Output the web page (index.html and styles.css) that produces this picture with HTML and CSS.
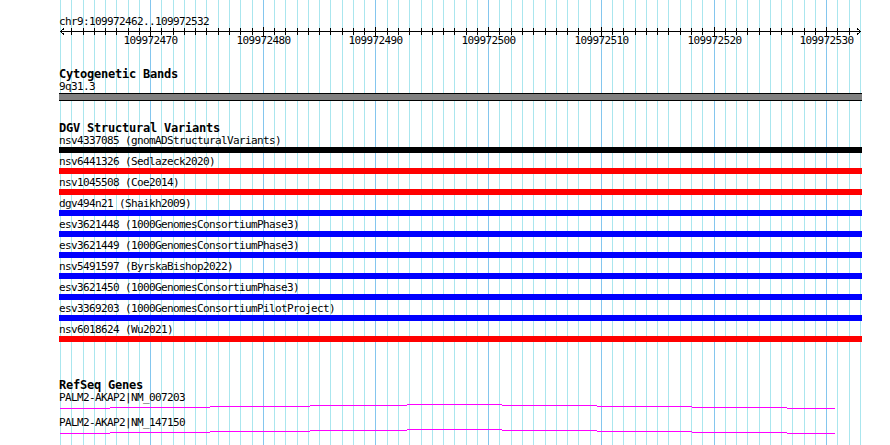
FILE: index.html
```html
<!DOCTYPE html>
<html>
<head>
    <meta charset="UTF-8">
    <title>chr9:109972462..109972532</title>
    <link rel="stylesheet" href="styles.css">
</head>
<body>
    <div class="view">
        <svg class="grid" id="grid" width="890" height="445"></svg>

        <div class="tracks">
            <div class="locus">chr9:109972462..109972532</div>
            <svg class="ruler" id="ruler" width="803" height="20"></svg>

            <section class="track cyto">
                <h2>Cytogenetic Bands</h2>
                <div class="label">9q31.3</div>
                <div class="band"></div>
            </section>

            <section class="track dgv">
                <h2>DGV Structural Variants</h2>
                <div class="feature">
                    <div class="label">nsv4337085 (gnomADStructuralVariants)</div>
                    <div class="bar loss-gain"></div>
                </div>
                <div class="feature">
                    <div class="label">nsv6441326 (Sedlazeck2020)</div>
                    <div class="bar loss"></div>
                </div>
                <div class="feature">
                    <div class="label">nsv1045508 (Coe2014)</div>
                    <div class="bar loss"></div>
                </div>
                <div class="feature">
                    <div class="label">dgv494n21 (Shaikh2009)</div>
                    <div class="bar gain"></div>
                </div>
                <div class="feature">
                    <div class="label">esv3621448 (1000GenomesConsortiumPhase3)</div>
                    <div class="bar gain"></div>
                </div>
                <div class="feature">
                    <div class="label">esv3621449 (1000GenomesConsortiumPhase3)</div>
                    <div class="bar gain"></div>
                </div>
                <div class="feature">
                    <div class="label">nsv5491597 (ByrskaBishop2022)</div>
                    <div class="bar gain"></div>
                </div>
                <div class="feature">
                    <div class="label">esv3621450 (1000GenomesConsortiumPhase3)</div>
                    <div class="bar gain"></div>
                </div>
                <div class="feature">
                    <div class="label">esv3369203 (1000GenomesConsortiumPilotProject)</div>
                    <div class="bar gain"></div>
                </div>
                <div class="feature">
                    <div class="label">nsv6018624 (Wu2021)</div>
                    <div class="bar loss"></div>
                </div>
            </section>

            <section class="track genes">
                <h2>RefSeq Genes</h2>
                <div class="gene">
                    <div class="label">PALM2-AKAP2|NM_007203</div>
                    <svg class="intron" width="803" height="12">
                        <path d="M1 4.5H51M51 3.5H151M151 2.5H251M251 1.5H348M348 0.5H443M443 1.5H538M538 2.5H633M633 3.5H728M728 4.5H776"/>
                    </svg>
                </div>
                <div class="gene">
                    <div class="label">PALM2-AKAP2|NM_147150</div>
                    <svg class="intron" width="803" height="12">
                        <path d="M1 4.5H51M51 3.5H151M151 2.5H251M251 1.5H348M348 0.5H443M443 1.5H538M538 2.5H633M633 3.5H728M728 4.5H776"/>
                    </svg>
                </div>
            </section>
        </div>
    </div>

    <script>
        document.addEventListener('DOMContentLoaded', () => {
            const ns = 'http://www.w3.org/2000/svg';
            const grid = document.getElementById('grid');
            const ruler = document.getElementById('ruler');
            const start = 109972462;
            const bases = 71;
            const left = 59; // ruler svg sits at the track padding

            function add(parent, tag, attrs) {
                const el = document.createElementNS(ns, tag);
                for (const k in attrs) el.setAttribute(k, attrs[k]);
                parent.appendChild(el);
                return el;
            }

            // axis with arrow heads
            add(ruler, 'path', { d: 'M1 3.5H802', class: 'axis' });
            add(ruler, 'path', { d: 'M5 0.5L1.5 3.5L5 6.5', class: 'axis' });
            add(ruler, 'path', { d: 'M798 0.5L801.5 3.5L798 6.5', class: 'axis' });

            for (let i = 0; i <= bases; i++) {
                const x = Math.round(60 + i * 800 / bases) + 0.5;
                const pos = start + i;
                const major = pos % 10 === 0;

                add(grid, 'line', {
                    x1: x, y1: 0, x2: x, y2: 445,
                    class: major ? 'major' : 'minor'
                });

                if (i > 0 && i < bases) {
                    add(ruler, 'line', {
                        x1: x - left, y1: major ? -1 : 0, x2: x - left, y2: major ? 8 : 7,
                        class: 'axis'
                    });
                }

                if (major) {
                    const t = add(ruler, 'text', { x: x - left, y: 16, class: 'tick-label' });
                    t.textContent = pos;
                }
            }
        });
    </script>
</body>
</html>
```

FILE: styles.css
```css
body {
    margin: 0;
    font-family: "DejaVu Sans Mono", "Liberation Mono", monospace;
    font-size: 11px;
    letter-spacing: -0.62px;
    color: #000;
    background: #fff;
}

.view {
    position: relative;
    width: 890px;
    height: 445px;
    overflow: hidden;
}

.grid {
    position: absolute;
    top: 0;
    left: 0;
}

.grid line {
    stroke-width: 1;
    shape-rendering: crispEdges;
}

.grid .minor {
    stroke: #aae6ee;
}

.grid .major {
    stroke: #84c6ee;
}

.tracks {
    position: relative;
    padding: 15px 0 0 59px;
}

.locus {
    line-height: 13px;
    white-space: nowrap;
}

.ruler {
    display: block;
    overflow: visible;
}

.ruler .axis {
    stroke: #000;
    stroke-width: 1;
    fill: none;
    shape-rendering: crispEdges;
}

.ruler .tick-label {
    font-family: "DejaVu Sans Mono", "Liberation Mono", monospace;
    font-size: 11px;
    letter-spacing: -0.62px;
    text-anchor: middle;
    fill: #000;
}

.track h2 {
    margin: 0;
    font-size: 12px;
    letter-spacing: -0.22px;
    font-weight: bold;
    line-height: 12px;
    white-space: nowrap;
}

.label {
    line-height: 13px;
    white-space: nowrap;
}

.cyto {
    margin-top: 20px;
}

.band {
    width: 803px;
    height: 6px;
    border-top: 1px solid #000;
    border-bottom: 1px solid #000;
    background: #808080;
}

.dgv {
    margin-top: 21px;
}

.feature {
    padding-bottom: 2px;
}

.bar {
    width: 803px;
    height: 6px;
}

.bar.loss-gain {
    background: #000;
}

.bar.loss {
    background: #ff0000;
}

.bar.gain {
    background: #0000ff;
}

.genes {
    margin-top: 35px;
}

.intron {
    display: block;
}

.intron path {
    stroke: #ff00ff;
    stroke-width: 1;
    fill: none;
    shape-rendering: crispEdges;
}
```
